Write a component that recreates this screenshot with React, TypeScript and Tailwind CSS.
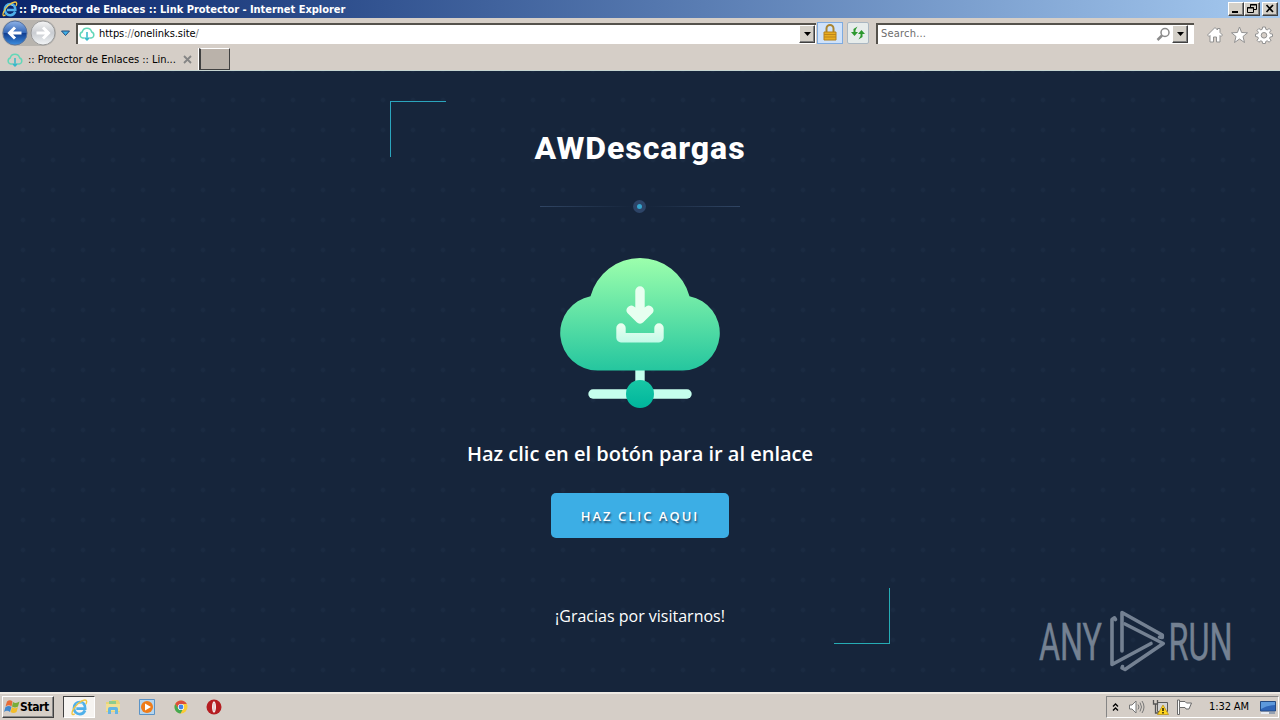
import { ReactNode } from "react";

function IeIcon({ size }: { size: number }) {
  return (
    <svg width={size} height={size} viewBox="0 0 16 16" fill="none">
      <path
        d="M13.200 10.700C12.200 13 10.500 14.200 8.300 14.200C5.100 14.200 2.800 11.800 2.800 8.600C2.800 5.300 5.200 3 8.300 3C11.700 3 13.500 5.500 13.300 9H5"
        stroke="#4fb0ea"
        strokeWidth="2.600"
      />
      <path d="M5 5Q8 2.500 11 4.500" stroke="#8bd3fb" strokeWidth="1" />
      <path
        d="M3.500 13.800C1 16 .3 14 1.700 10.700C3.500 6.500 9 1.300 13 1C15.200 .9 15 3 14 5"
        stroke="#f0c541"
        strokeWidth="1.300"
      />
    </svg>
  );
}

function CloudIcon() {
  return (
    <svg width="16" height="16" viewBox="0 0 16 16" fill="none" strokeWidth="1.500">
      <path
        d="M5 12H3.800A3.100 3.100 0 0 1 3.200 6A4.900 4.900 0 0 1 12.700 6A3.100 3.100 0 0 1 12.200 12H11"
        stroke="#63d7b8"
      />
      <path d="M8 6V14M5.500 11.500L8 14L10.500 11.500" stroke="#35b9c9" />
    </svg>
  );
}

function NavButton({ back }: { back?: boolean }) {
  return (
    <svg width="26" height="26" viewBox="0 0 26 26">
      <defs>
        <linearGradient id="nav-back" x2="0" y2="1">
          <stop stopColor="#8fb3e8" />
          <stop offset=".48" stopColor="#3568b8" />
          <stop offset=".52" stopColor="#123f91" />
          <stop offset="1" stopColor="#3d8ee0" />
        </linearGradient>
        <linearGradient id="nav-next" x2="0" y2="1">
          <stop stopColor="#f5f5f5" />
          <stop offset=".5" stopColor="#c9ccd1" />
          <stop offset="1" stopColor="#f4f6f8" />
        </linearGradient>
      </defs>
      <circle
        cx="13"
        cy="13"
        r="12"
        fill={back ? "url(#nav-back)" : "url(#nav-next)"}
        stroke={back ? "#58739f" : "#9a9a9a"}
      />
      <path
        d={
          back
            ? "M19.500 13H8M13 7.500L7.500 13L13 18.500"
            : "M6.500 13H18M13 7.500L18.500 13L13 18.500"
        }
        stroke="#fff"
        strokeWidth="3"
        fill="none"
      />
    </svg>
  );
}

function DropButton() {
  return (
    <div className="flex h-[18px] w-4 shrink-0 items-center justify-center border border-t-white border-l-white border-r-[#404040] border-b-[#404040] bg-[#d4d0c8] shadow-[inset_-1px_-1px_0_#808080]">
      <svg width="7" height="4" viewBox="0 0 7 4">
        <path d="M0 0H7L3.500 4Z" />
      </svg>
    </div>
  );
}

function WindowButton({ children }: { children: ReactNode }) {
  return (
    <div className="h-[14px] w-4 border border-t-white border-l-white border-r-[#404040] border-b-[#404040] bg-[#d4d0c8] shadow-[inset_-1px_-1px_0_#808080]">
      <svg width="14" height="12" viewBox="0 0 14 12" fill="none" stroke="#000">
        {children}
      </svg>
    </div>
  );
}

function TitleBar() {
  return (
    <div className="flex h-[18px] items-center bg-linear-to-r from-[#0a246a] to-[#a6caf0] pr-[2px] pl-[2px]">
      <IeIcon size={16} />
      <span className="mt-px ml-px w-[328px] font-bold tracking-[-0.03px] text-white">
        :: Protector de Enlaces :: Link Protector - Internet Explorer
      </span>
      <div className="ml-auto flex">
        <WindowButton>
          <path d="M3 9H9" strokeWidth="2" />
        </WindowButton>
        <WindowButton>
          <path d="M5.500 4V1.500H11.500V6.500H9M5 2H12M2.500 4.500H8.500V9.500H2.500ZM2 5H9" />
        </WindowButton>
        <div className="ml-[2px]">
          <WindowButton>
            <path d="M3.500 2L10 9M10 2L3.500 9" strokeWidth="1.700" />
          </WindowButton>
        </div>
      </div>
    </div>
  );
}

function AddressBar() {
  return (
    <div className="flex h-[30px] items-center">
      <div className="ml-[2px] flex rounded-full bg-[#b8b4ae]">
        <NavButton back />
        <div className="ml-[2px]">
          <NavButton />
        </div>
      </div>
      <svg className="ml-[4px] shrink-0" width="11" height="7" viewBox="0 0 11 7">
        <path d="M1.500 1H9.500L5.500 5.500Z" fill="#3eb0e8" stroke="#244c7b" />
      </svg>
      <div className="ml-[5px] flex h-[21px] w-[740px] items-center border-t-2 border-l-2 border-[#55524c] bg-white pr-[1px] pl-[1px]">
        <CloudIcon />
        <span className="ml-[4px] tracking-[-0.05px]">
          <span className="text-[#777]">
            <span className="text-black">https</span>://
          </span>
          onelinks.site<span className="text-[#777]">/</span>
        </span>
        <div className="ml-auto">
          <DropButton />
        </div>
      </div>
      <div className="ml-[1px] flex h-[22px] w-[26px] items-center justify-center border border-[#7eabe0] bg-[#cfe2fa]">
        <svg width="16" height="18" viewBox="0 0 16 18">
          <path d="M4.500 9V4.500a3.500 3.500 0 0 1 7 0V9" fill="none" stroke="#a98532" strokeWidth="2" />
          <path d="M2 8H14V16H2Z" fill="#e8ad20" stroke="#b5801b" />
          <path d="M2 10.500H14M2 13H14" stroke="#bd851a" />
        </svg>
      </div>
      <div className="ml-[4px] flex h-[22px] w-[22px] items-center justify-center rounded-[2px] border border-[#aab7c2] bg-[#e6eceb]">
        <svg width="16" height="16" viewBox="0 0 16 16" fill="#2c982f">
          <path d="M7.500 1.500L3.500 4V7H1L4.500 11L8 7H5.500V5Z" />
          <path d="M8.500 14.500L12.500 12V9H15L11.500 5L8 9H10.500V11Z" />
        </svg>
      </div>
      <div className="ml-[7px] flex h-[21px] w-[318px] items-center border-t-2 border-l-2 border-[#55524c] bg-white pr-[6px] pl-[3px]">
        <span className="tracking-[0.2px] text-[#6d6d6d]">Search...</span>
        <svg className="ml-auto mr-px" width="15" height="15" viewBox="0 0 15 15" fill="none" stroke="#8a8a8a">
          <circle cx="9" cy="5.500" r="4" strokeWidth="1.500" />
          <path d="M6 8.500L1.500 13" strokeWidth="2.500" />
        </svg>
        <DropButton />
      </div>
      <svg className="ml-[12px] mt-1" width="68" height="20" viewBox="0 0 68 20" fill="#fff" stroke="#919191" strokeLinejoin="round">
        <path d="M1.500 10L9 2.500L11.500 5V3.500H14V7.500L16.500 10L15 11.500L14 10.500V17H10.500V12H7.500V17H4V10.500L3 11.500Z" />
        <path d="M33.500 2L35.600 7.500L41.500 7.800L37 11.500L38.500 17.500L33.500 14L28.500 17.500L30 11.500L25.500 7.800L31.400 7.500Z" />
        <path
          fillRule="evenodd"
          d="M56.600 2H59.400L59.800 4.300L61.200 4.900L63.100 3.500L65 5.400L63.600 7.300L64.200 8.700L66.500 9.100V11.500L64.200 12L63.600 13.400L65 15.300L63.100 17.200L61.200 15.800L59.800 16.400L59.400 18.500H56.600L56.200 16.400L54.800 15.800L52.900 17.200L51 15.300L52.400 13.400L51.800 12L49.500 11.500V9.100L51.800 8.700L52.400 7.300L51 5.400L52.900 3.500L54.800 4.900L56.200 4.300ZM58 7.500A2.800 2.800 0 1 0 58 13.100A2.800 2.800 0 1 0 58 7.500Z"
        />
      </svg>
    </div>
  );
}

function TabStrip() {
  return (
    <div className="flex h-[23px] border-b border-[#c5d4d0]">
      <div className="flex w-[199px] items-center border-r border-white pt-px pl-[7px]">
        <CloudIcon />
        <span className="mt-px ml-[5px] w-[149px] tracking-[-0.02px]">
          :: Protector de Enlaces :: Lin...
        </span>
        <svg className="ml-[6px]" width="9" height="9" viewBox="0 0 9 9" stroke="#858585" strokeWidth="1.800">
          <path d="M1 1L8 8M8 1L1 8" />
        </svg>
      </div>
      <div className="h-[22px] w-[31px] border border-t-white border-l-2 border-l-[#404040] border-r-[#404040] border-b-[#404040] bg-[#bab2aa]" />
    </div>
  );
}

function CloudArt() {
  return (
    <svg width="160" height="150" viewBox="0 0 160 150">
      <defs>
        <linearGradient id="cloud" x2="0" y2="1">
          <stop stopColor="#9cffac" />
          <stop offset="1" stopColor="#25c69f" />
        </linearGradient>
        <linearGradient id="arrow" x2="0" y2="1">
          <stop stopColor="#edfff0" />
          <stop offset="1" stopColor="#c2fae8" />
        </linearGradient>
        <linearGradient id="node" x2="0" y2="1">
          <stop stopColor="#18c8a5" />
          <stop offset="1" stopColor="#00b59c" />
        </linearGradient>
      </defs>
      <path d="M80 108V128" stroke="#c5ffed" strokeWidth="9.400" />
      <path d="M33 136H127" stroke="#c5ffed" strokeWidth="9.400" strokeLinecap="round" />
      <circle cx="80" cy="136" r="14" fill="url(#node)" />
      <path
        d="M37.500 112.500A37.500 37.500 0 0 1 30.500 38.200A51.200 51.200 0 0 1 129.500 38.200A37.500 37.500 0 0 1 122.500 112.500Z"
        fill="url(#cloud)"
      />
      <path
        d="M75.300 33a4.700 4.700 0 0 1 9.400 0V49.500L86 48.500A4.700 4.700 0 0 1 92.600 55L83.300 64.300A4.700 4.700 0 0 1 76.700 64.300L67.400 55A4.700 4.700 0 0 1 74 48.500L75.300 49.500Z"
        fill="#e7fff0"
      />
      <path
        d="M56.300 70a4.700 4.700 0 0 1 9.400 0V75H94.300V70a4.700 4.700 0 0 1 9.400 0V79.700A4.700 4.700 0 0 1 99 84.400H61A4.700 4.700 0 0 1 56.300 79.700Z"
        fill="url(#arrow)"
      />
    </svg>
  );
}

function Divider() {
  return (
    <div className="mt-[30px] flex h-[15px] w-[200px] items-center pb-px">
      <div className="h-px w-[93px] bg-linear-to-r from-[#304563] to-transparent" />
      <div className="flex size-[13px] items-center justify-center rounded-full bg-[#2d4467]">
        <div className="size-[5px] rounded-full bg-[#35a4cc]" />
      </div>
      <div className="h-px flex-1 bg-linear-to-l from-[#304563] to-transparent" />
    </div>
  );
}

function Watermark() {
  return (
    <svg
      className="absolute top-[536px] left-[1036px] overflow-visible"
      width="220"
      height="68"
      viewBox="0 0 220 68"
      fill="none"
    >
      <g
        fill="#748192"
        stroke="#748192"
        strokeWidth=".5"
        fontFamily="Roboto, sans-serif"
        fontSize="51.500"
        fontWeight="400"
      >
        <text x="3" y="52.500" textLength="63" lengthAdjust="spacingAndGlyphs">
          ANY
        </text>
        <text x="132.500" y="52.500" textLength="64" lengthAdjust="spacingAndGlyphs">
          RUN
        </text>
      </g>
      <g stroke="#748192" strokeWidth="3.600" strokeLinejoin="round" strokeLinecap="round">
        <path d="M79.500 12.500L78.500 10.800L76 12.500V57.500L115 36.500" />
        <path d="M86 44V5.500L126.300 28V30.500L123.500 30" />
        <path d="M89 17L127.300 36.500L89 62.500L86 61L86.500 59.500" />
      </g>
    </svg>
  );
}

function Page() {
  return (
    <main className="relative flex h-[621px] justify-center overflow-hidden bg-[#16253b] pt-[30px] font-['Open_Sans',sans-serif] text-white">
      <div className="absolute inset-0 bg-[radial-gradient(circle,#1a2a41_1.5px,transparent_3px)] bg-size-[30px_30px] bg-position-[8px_14px]" />
      <div className="relative flex h-[543px] w-[500px] flex-col items-center">
        <div className="absolute top-0 left-0 h-[56px] w-[56px] border-t border-l border-[#2ba5bd]" />
        <div className="absolute right-0 bottom-0 h-[56px] w-[56px] border-r border-b border-[#26acb4]" />
        <h1 className="mt-[26px] h-[42px] font-[Roboto,sans-serif] text-[32px] leading-[42px] font-extrabold tracking-[0.95px] whitespace-nowrap">
          AWDescargas
        </h1>
        <Divider />
        <div className="mt-[44px]">
          <CloudArt />
        </div>
        <h2 className="mt-[32px] h-7 text-[20px] leading-7 font-semibold whitespace-nowrap">
          Haz clic en el botón para ir al enlace
        </h2>
        <button className="mt-[25px] h-[45px] w-[178px] rounded-[5px] bg-[#3caee5] text-[13px] font-semibold tracking-[2px] [text-shadow:1px_2px_2px_#23496a]">
          HAZ CLIC AQUI
        </button>
        <p className="mt-[66px] text-base leading-6">¡Gracias por visitarnos!</p>
      </div>
      <Watermark />
    </main>
  );
}

function Taskbar() {
  return (
    <div className="flex h-7 items-center border-t-2 border-[#eeeae4] pl-[2px]">
      <div className="flex h-[22px] w-[52px] items-center border border-t-white border-l-white border-r-[#404040] border-b-[#404040] pl-[1px] shadow-[inset_-1px_-1px_0_#888]">
        <svg width="16" height="16" viewBox="0 0 16 16">
          <path d="M3 2.500Q6 0 8.500 2.500L7.500 7.500Q5 5 1.500 7.500Z" fill="#e86c36" />
          <path d="M9 3Q12 5 15.500 2.500L14 7.500Q11 9.500 8 7.500Z" fill="#79ad39" />
          <path d="M1.500 8Q5 6 7.500 8L6 13Q3 10.500 0 13Z" fill="#4187cd" />
          <path d="M8 8Q11 10.500 14 8L12.500 13Q9.500 15 6.500 13Z" fill="#f3bd2b" />
        </svg>
        <span className="text-[12px] font-bold tracking-[-0.4px]">Start</span>
      </div>
      <div className="ml-[9px] flex h-[22px] w-[32px] items-center justify-center border border-t-[#404040] border-l-[#404040] border-white bg-[#f6f4f1]">
        <IeIcon size={17} />
      </div>
      <svg className="ml-[10px]" width="16" height="16" viewBox="0 0 16 16">
        <path d="M1 3H6L7 1H13L15 4V13H1Z" fill="#e9d478" />
        <path d="M4 2H11V5H4Z" fill="#8dcc8d" />
        <path d="M1 5H15V12H1Z" fill="#f1df94" />
        <path d="M3 15V10Q3 8 5 8H11Q13 8 13 10V15H10V11H6V15Z" fill="#64b5e4" />
      </svg>
      <svg className="ml-[18px]" width="16" height="16" viewBox="0 0 16 16">
        <path d="M.5.500H15.500V15.500H.5Z" fill="#b5d5ee" stroke="#5b93c6" />
        <circle cx="8" cy="8" r="6" fill="#ef7c19" />
        <path d="M6 4.500L12 8L6 11.500Z" fill="#fff" />
      </svg>
      <svg className="ml-[19px]" width="14" height="14" viewBox="0 0 14 14">
        <circle cx="7" cy="7" r="6.500" fill="#fbcb35" />
        <path d="M1.200 4A6.500 6.500 0 0 1 12.800 4H7A3 3 0 0 0 4.400 8.500Z" fill="#dc4d3c" />
        <path d="M1.200 4L4.400 8.500A3 3 0 0 0 9 9L6.500 13.500A6.500 6.500 0 0 1 1.200 4Z" fill="#44a852" />
        <circle cx="7" cy="7" r="3.100" fill="#fff" />
        <circle cx="7" cy="7" r="2.400" fill="#4384e8" />
      </svg>
      <svg className="ml-[18px]" width="16" height="16" viewBox="0 0 16 16">
        <circle cx="8" cy="8" r="7.500" fill="#b51d21" />
        <ellipse cx="8" cy="8" rx="2" ry="5.800" fill="#f4efef" />
        <path d="M8 4V12" stroke="#d88f91" strokeWidth=".6" />
      </svg>
      <div className="mr-px ml-auto flex h-[22px] w-[173px] items-center border border-t-[#858585] border-l-[#858585] border-white pl-[5px]">
        <svg width="7" height="9" viewBox="0 0 7 9" fill="none" stroke="#000" strokeWidth="1.300">
          <path d="M1 3.500L3.500 1L6 3.500M1 7.500L3.500 5L6 7.500" />
        </svg>
        <svg className="ml-[9px]" width="17" height="16" viewBox="0 0 17 16" fill="none" stroke="#777">
          <path d="M1.500 6V10H4L8 14V2L4 6Z" fill="#fff" />
          <path d="M10 5.500Q12 8 10 10.500M12 3.500Q15 8 12 12.500M14 2Q18 8 14 14" />
        </svg>
        <svg className="ml-[7px]" width="17" height="16" viewBox="0 0 17 16">
          <path d="M5.500 3.500H15.500V12.500H5.500Z" fill="#d4d4d4" stroke="#5b5b5b" />
          <path d="M1.500 1V5H5.500V1M3.500 5V14H7" fill="none" stroke="#555" strokeWidth="1.300" />
          <path d="M11 6L16.500 15.500H5.500Z" fill="#ffd51e" stroke="#b68a0a" strokeWidth=".7" />
          <path d="M11 9V12M11 13V14.500" stroke="#000" strokeWidth="1.300" />
        </svg>
        <svg className="ml-[7px]" width="17" height="16" viewBox="0 0 17 16" fill="#fff" stroke="#6b6b6b">
          <path d="M1.500 1V15.500H3.500V1Z" />
          <path d="M3.500 2.500H9L10.500 4H15.500L13 10H10L9 8.500H3.500Z" />
        </svg>
        <span className="ml-[16px] w-[41px] tracking-[-0.1px]">1:32 AM</span>
        <svg className="ml-[10px]" width="16" height="16" viewBox="0 0 16 16">
          <path d="M.5 2.500H15.500V12H.5Z" fill="#2f65b7" stroke="#244b83" />
          <path d="M1 3H15V6Q7 6 1 10Z" fill="#5d99dc" />
          <path d="M1 14H9" stroke="#edf5ff" strokeWidth="1.500" />
          <path d="M9 14H15" stroke="#54749b" />
        </svg>
      </div>
    </div>
  );
}

export default function App() {
  return (
    <div className="flex h-[720px] w-[1280px] flex-col overflow-hidden bg-[#d5cec7] font-['DejaVu_Sans_Condensed','DejaVu_Sans',sans-serif] text-[11px] leading-[14px] whitespace-nowrap text-black">
      <TitleBar />
      <AddressBar />
      <TabStrip />
      <Page />
      <Taskbar />
    </div>
  );
}
